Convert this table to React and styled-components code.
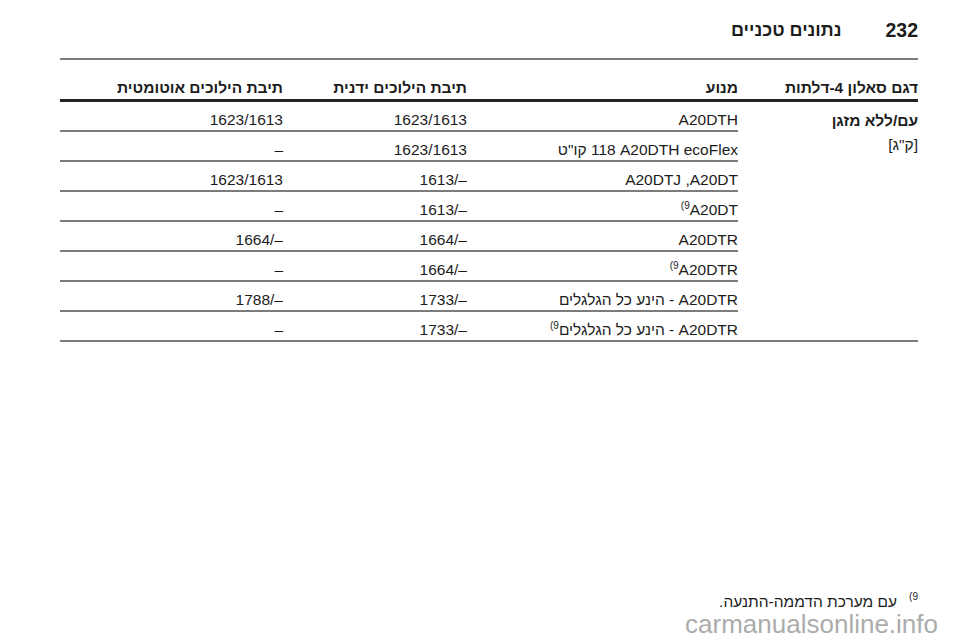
import React from "react";
import styled, { createGlobalStyle } from "styled-components";

const Global = createGlobalStyle`
  html, body { margin: 0; padding: 0; background: #ffffff; }
  body { font-family: "Liberation Sans", Arial, sans-serif; color: #1c1c1c; }
`;

const Page = styled.div`
  width: 960px;
  height: 642px;
  box-sizing: border-box;
  padding: 0 42px 5px 60px;
  display: flex;
  flex-direction: column;
  direction: rtl;
  overflow: hidden;
`;

const Header = styled.header`
  height: 60px;
  box-sizing: border-box;
  padding-top: 2px;
  border-bottom: 2px solid #7c7c7c;
  display: flex;
  align-items: center;
  gap: 44px;
`;

const PageNum = styled.span`
  font-size: 19.5px;
  font-weight: 700;
`;

const Title = styled.span`
  font-size: 18px;
  font-weight: 700;
`;

const Table = styled.div`
  display: grid;
  grid-template-columns: 180px 271px 184px 223px;
  grid-auto-rows: auto;
`;

const HeadCell = styled.div`
  height: 42px;
  box-sizing: border-box;
  border-bottom: 3px solid #232323;
  display: flex;
  align-items: flex-end;
  padding-bottom: 2px;
  font-size: 15.5px;
  font-weight: 700;
  line-height: 18px;
  white-space: nowrap;
`;

const LabelCell = styled.div`
  grid-column: 1;
  grid-row: 2 / span 8;
  box-sizing: border-box;
  border-bottom: 2px solid #7c7c7c;
  padding-top: 7px;
  font-size: 15.5px;
  line-height: 24px;
`;

const LabelTitle = styled.div`
  font-weight: 700;
`;

const Cell = styled.div`
  height: 30px;
  box-sizing: border-box;
  border-bottom: 2px solid #7c7c7c;
  padding-top: 7px;
  display: flex;
  align-items: center;
  font-size: 15.5px;
  line-height: 18px;
  white-space: nowrap;
`;

const Num = styled.span`
  direction: ltr;
  unicode-bidi: isolate;
`;

const Sup = styled.sup`
  direction: ltr;
  unicode-bidi: isolate;
  font-size: 10px;
  line-height: 0;
  vertical-align: 6px;
`;

const Footer = styled.footer`
  margin-top: auto;
  display: flex;
  flex-direction: column;
`;

const Footnote = styled.div`
  display: flex;
  align-items: flex-start;
  gap: 12px;
  font-size: 15.5px;
  line-height: 18px;
`;

const NoteMark = styled.span`
  direction: ltr;
  unicode-bidi: isolate;
  font-size: 10px;
  line-height: 10px;
  margin-top: -1px;
`;

const Watermark = styled.div`
  direction: ltr;
  text-align: right;
  margin-right: -20px;
  font-size: 26px;
  line-height: 26px;
  color: #acacac;
`;

const heads = [
  "דגם סאלון 4-דלתות",
  "מנוע",
  "תיבת הילוכים ידנית",
  "תיבת הילוכים אוטומטית",
];

const rows = [
  { engine: "A20DTH", manual: "1623/1613", auto: "1623/1613" },
  { engine: "A20DTH ecoFlex\u200F 118 קו\"ט", manual: "1623/1613", auto: "–" },
  { engine: "A20DT\u200F, A20DTJ", manual: "1613/–", auto: "1623/1613" },
  { engine: "A20DT", note: true, manual: "1613/–", auto: "–" },
  { engine: "A20DTR", manual: "1664/–", auto: "1664/–" },
  { engine: "A20DTR", note: true, manual: "1664/–", auto: "–" },
  { engine: "A20DTR - הינע כל הגלגלים", manual: "1733/–", auto: "1788/–" },
  { engine: "A20DTR - הינע כל הגלגלים", note: true, manual: "1733/–", auto: "–" },
];

export default function App() {
  return (
    <>
      <Global />
      <Page>
        <Header>
          <PageNum>232</PageNum>
          <Title>נתונים טכניים</Title>
        </Header>
        <Table>
          {heads.map((h) => (
            <HeadCell key={h}>{h}</HeadCell>
          ))}
          <LabelCell>
            <LabelTitle>עם/ללא מזגן</LabelTitle>
            <div>[ק"ג]</div>
          </LabelCell>
          {rows.map((r, i) => (
            <React.Fragment key={i}>
              <Cell>
                <span>
                  {r.engine}
                  {r.note && <Sup>(9</Sup>}
                </span>
              </Cell>
              <Cell>
                <Num>{r.manual}</Num>
              </Cell>
              <Cell>
                <Num>{r.auto}</Num>
              </Cell>
            </React.Fragment>
          ))}
        </Table>
        <Footer>
          <Footnote>
            <NoteMark>(9</NoteMark>
            <span>עם מערכת הדממה-התנעה.</span>
          </Footnote>
          <Watermark>carmanualsonline.info</Watermark>
        </Footer>
      </Page>
    </>
  );
}
